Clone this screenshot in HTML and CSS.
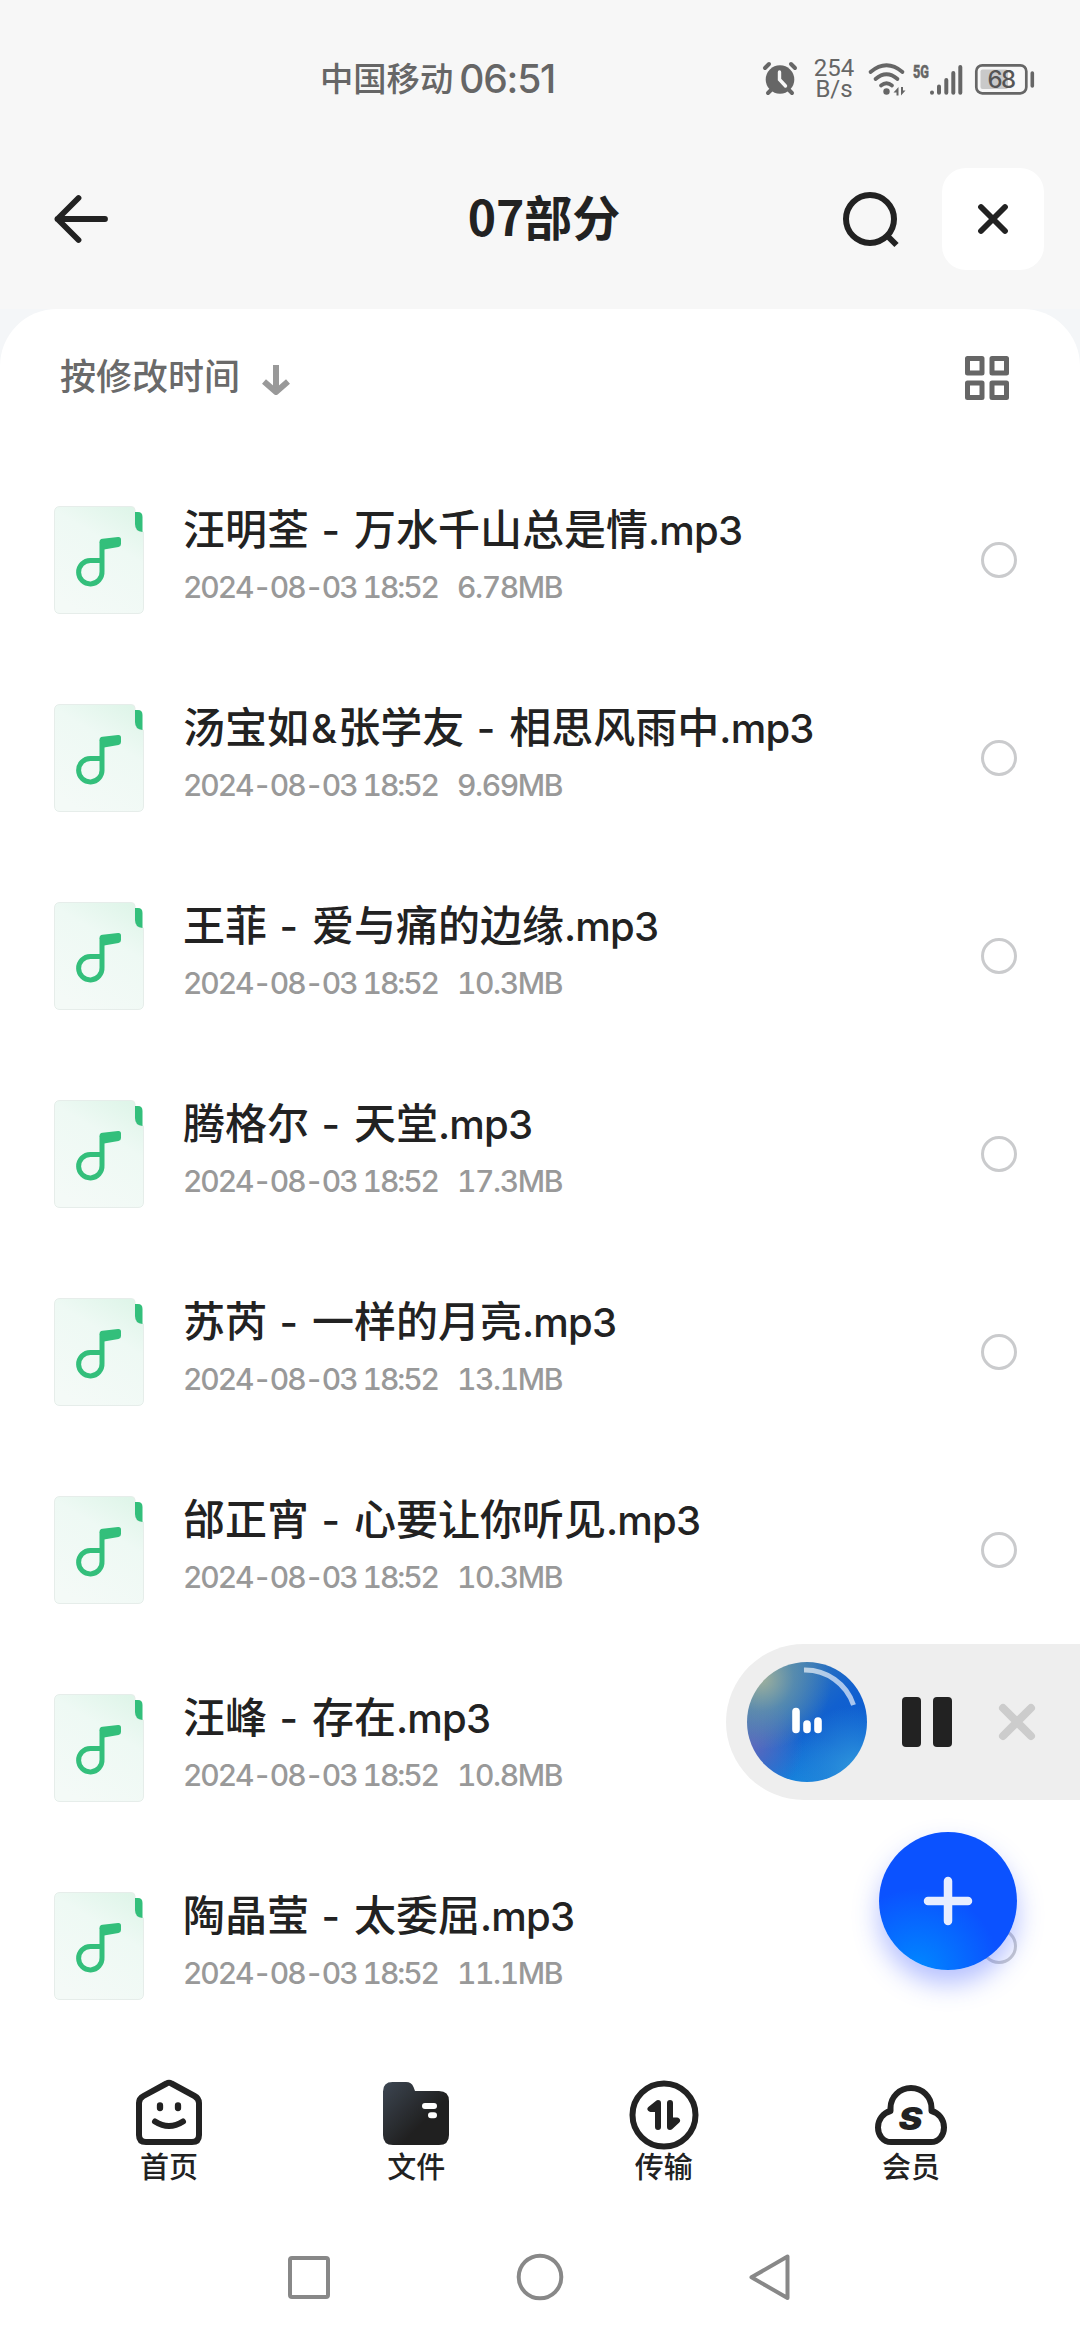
FILE: index.html
```html
<!DOCTYPE html>
<html lang="zh-CN">
<head>
<meta charset="utf-8">
<title>07部分</title>
<link rel="stylesheet" href="styles.css">
</head>
<body>
<svg width="0" height="0" class="defs" aria-hidden="true">
  <defs>
    <linearGradient id="paper" x1="0.8" y1="0" x2="0.3" y2="1">
      <stop offset="0" stop-color="#dff5e9"/><stop offset="0.35" stop-color="#eef9f4"/><stop offset="1" stop-color="#f4faf7"/>
    </linearGradient>
    <linearGradient id="folder" x1="0" y1="0" x2="0.65" y2="0.6">
      <stop offset="0" stop-color="#3d4652"/><stop offset="1" stop-color="#202020"/>
    </linearGradient>
    <symbol id="song" viewBox="0 0 90 108">
      <path d="M6 .5H77Q81 .5 81 4V19Q81 26 89.500 26V102Q89.500 107.500 84 107.500H6Q.5 107.500 .5 102V6Q.5 .5 6 .5Z" fill="url(#paper)" stroke="#e6edea"/>
      <path d="M81 6H84Q88.500 6 88.500 11V26Q81 25.500 81 18Z" fill="#33bf7b"/>
      <path d="M48 36V65.500A11.700 11.700 0 1 1 36.300 54.500H48" fill="none" stroke="#33bf7b" stroke-width="5"/>
      <path d="M45.500 36Q45.500 33 48.500 32.700L64 31Q67 30.700 67 33.500V38Q67 40.500 64.500 41L50 43.500Z" fill="#33bf7b"/>
    </symbol>
  </defs>
</svg>
<div class="phone">
  <div class="status">
    <div class="carrier"><span class="operator">中国移动</span><span class="clock">06:51</span></div>
    <svg class="alarm" width="34" height="34" viewBox="0 0 34 34">
      <circle cx="17" cy="17.500" r="14.300" fill="#666"/>
      <path d="M2 6 6 2M32 6 28 2M5 31 8 28M29 31 26 28" stroke="#666" stroke-width="4" stroke-linecap="round"/>
      <path d="M16.500 10V17.500L22.500 24" fill="none" stroke="#f7f7f7" stroke-width="3.400" stroke-linecap="round"/>
    </svg>
    <div class="speed"><span>254</span><span>B/s</span></div>
    <svg class="wifi" width="40" height="34" viewBox="0 0 40 34">
      <g fill="none" stroke="#666" stroke-width="3.700" stroke-linecap="round">
        <path d="M2.500 10Q18.500-3.500 34.500 10"/><path d="M7.500 17Q18.500 7.500 29.500 17"/><path d="M13 23.500Q18.500 19 24 23.500"/>
      </g>
      <circle cx="18.500" cy="29.500" r="3.200" fill="#666"/>
      <path d="M30.500 25V33.500H28.500V30.500H25.500ZM33 25V33.500L37.500 28.500H35V25Z" fill="#666"/>
    </svg>
    <svg class="signal" width="52" height="34" viewBox="0 0 52 34">
      <text x="1" y="15.500" textLength="16" lengthAdjust="spacingAndGlyphs" class="net">5G</text>
      <g stroke="#666" stroke-width="4" stroke-linecap="round"><path d="M20 30.500V30.700M27 24.500V30.700M34.300 18V30.700M41.300 11V30.700M48.300 5V30.700"/></g>
    </svg>
    <svg class="battery" width="60" height="32" viewBox="0 0 60 32">
      <rect x="1.300" y="2.300" width="50" height="28" rx="6" fill="none" stroke="#666" stroke-width="2.700"/>
      <rect x="5.500" y="6.500" width="27.500" height="19.500" rx="2" fill="#c9c9c9"/>
      <path d="M57.300 10V23" stroke="#666" stroke-width="3.600" stroke-linecap="round"/>
      <text x="26" y="25" text-anchor="middle" class="charge">68</text>
    </svg>
  </div>

  <header class="header">
    <svg class="back" width="54" height="50" viewBox="0 0 54 50"><path d="M24.500 4 3.500 25 24.500 46M3.500 25H51" fill="none" stroke="#222" stroke-width="5.800" stroke-linecap="round" stroke-linejoin="round"/></svg>
    <h1>07部分</h1>
    <div class="tools">
      <svg width="57" height="57" viewBox="0 0 57 57"><circle cx="27" cy="28" r="24" fill="none" stroke="#222" stroke-width="6"/><path d="M44 44.500 53.500 54" stroke="#222" stroke-width="6"/></svg>
      <div class="close"><svg width="32" height="32" viewBox="0 0 32 32"><path d="M4 4 28 28M28 4 4 28" stroke="#222" stroke-width="5.800" stroke-linecap="round"/></svg></div>
    </div>
  </header>

  <main class="sheet-back"><div class="sheet">
    <div class="sort">
      <span>按修改时间</span>
      <svg class="down" width="30" height="34" viewBox="0 0 30 34"><path d="M15 2V26" stroke="#999" stroke-width="6"/><path d="M3 18.500 15 29 27 18.500" fill="none" stroke="#999" stroke-width="6" stroke-linejoin="round"/></svg>
      <svg class="grid" width="44" height="44" viewBox="0 0 44 44"><g fill="none" stroke="#666" stroke-width="5" stroke-linejoin="round"><path d="M2.500 2.500H17V17H2.500ZM27 2.500H41.500V17H27ZM2.500 27H17V41.500H2.500ZM27 27H41.500V41.500H27Z"/></g></svg>
    </div>
    <ul class="files">
      <li><svg class="cover"><use href="#song"/></svg><div class="info"><p class="name">汪明荃<b class="dash"> - </b>万水千山总是情<b>.mp3</b></p><p class="meta"><span class="date">2024-08-03 18:52</span><span>6.78MB</span></p></div><i class="radio"></i></li>
      <li><svg class="cover"><use href="#song"/></svg><div class="info"><p class="name">汤宝如<b class="amp">&amp;</b>张学友<b class="dash"> - </b>相思风雨中<b>.mp3</b></p><p class="meta"><span class="date">2024-08-03 18:52</span><span>9.69MB</span></p></div><i class="radio"></i></li>
      <li><svg class="cover"><use href="#song"/></svg><div class="info"><p class="name">王菲<b class="dash"> - </b>爱与痛的边缘<b>.mp3</b></p><p class="meta"><span class="date">2024-08-03 18:52</span><span>10.3MB</span></p></div><i class="radio"></i></li>
      <li><svg class="cover"><use href="#song"/></svg><div class="info"><p class="name">腾格尔<b class="dash"> - </b>天堂<b>.mp3</b></p><p class="meta"><span class="date">2024-08-03 18:52</span><span>17.3MB</span></p></div><i class="radio"></i></li>
      <li><svg class="cover"><use href="#song"/></svg><div class="info"><p class="name">苏芮<b class="dash"> - </b>一样的月亮<b>.mp3</b></p><p class="meta"><span class="date">2024-08-03 18:52</span><span>13.1MB</span></p></div><i class="radio"></i></li>
      <li><svg class="cover"><use href="#song"/></svg><div class="info"><p class="name">邰正宵<b class="dash"> - </b>心要让你听见<b>.mp3</b></p><p class="meta"><span class="date">2024-08-03 18:52</span><span>10.3MB</span></p></div><i class="radio"></i></li>
      <li><svg class="cover"><use href="#song"/></svg><div class="info"><p class="name">汪峰<b class="dash"> - </b>存在<b>.mp3</b></p><p class="meta"><span class="date">2024-08-03 18:52</span><span>10.8MB</span></p></div><i class="radio"></i></li>
      <li><svg class="cover"><use href="#song"/></svg><div class="info"><p class="name">陶晶莹<b class="dash"> - </b>太委屈<b>.mp3</b></p><p class="meta"><span class="date">2024-08-03 18:52</span><span>11.1MB</span></p></div><i class="radio"></i></li>
    </ul>
  </div></main>

  <nav class="tabs">
    <a><svg width="72" height="72" viewBox="0 0 72 72"><g fill="none" stroke="#222" stroke-linecap="round" stroke-linejoin="round"><path d="M33.500 7.500Q36 6 38.500 7.500L61.500 20Q66 22.500 66 27V59Q66 66 59 66H13Q6 66 6 59V27Q6 22.500 10.500 20Z" stroke-width="6"/><path d="M22 45.500Q36 54.500 50 45.500" stroke-width="6"/><path d="M27 29.500V32M45 29.500V32" stroke-width="6.300"/></g></svg><span>首页</span></a>
    <a><svg width="72" height="72" viewBox="0 0 72 72"><path d="M12.500 6H26Q31.500 6 33.500 11L35 15H59Q69 15 69 25V59Q69 69 59 69H13Q3 69 3 59V15.500Q3 6 12.500 6Z" fill="url(#folder)"/><path d="M45 30H54M51 39.300H54" stroke="#fff" stroke-width="6" stroke-linecap="round"/></svg><span>文件</span></a>
    <a><svg width="72" height="72" viewBox="0 0 72 72"><circle cx="36" cy="39" r="31.500" fill="none" stroke="#222" stroke-width="6"/><path d="M30 51V27L22.500 33H30M42 27V51L49 44.500H42" fill="#222" stroke="#222" stroke-width="6" stroke-linecap="round" stroke-linejoin="round"/></svg><span>传输</span></a>
    <a><svg width="72" height="72" viewBox="0 0 72 72"><path d="M16 66C8 66 3 59 3 51.500C3 43.500 8 37 15.500 35V32A20.500 20 0 0 1 56.500 32V35C64 37 69 43.500 69 51.500C69 59 64 66 56 66Z" fill="none" stroke="#222" stroke-width="6" stroke-linejoin="round"/><text x="35.500" y="54" text-anchor="middle" textLength="24" lengthAdjust="spacingAndGlyphs" class="vip">S</text></svg><span>会员</span></a>
  </nav>

  <div class="system">
    <svg width="48" height="48" viewBox="0 0 48 48"><rect x="5" y="5" width="38" height="39" rx="2" fill="none" stroke="#888" stroke-width="4"/></svg>
    <svg width="48" height="48" viewBox="0 0 48 48"><circle cx="24" cy="24" r="21.300" fill="none" stroke="#888" stroke-width="4"/></svg>
    <svg width="48" height="48" viewBox="0 0 48 48"><path d="M40.500 3.500V45L4.500 24.300Z" fill="none" stroke="#888" stroke-width="4" stroke-linejoin="round"/></svg>
  </div>

  <div class="player">
    <div class="disc"><svg width="120" height="120" viewBox="0 0 120 120"><path d="M57 8A51 51 0 0 1 106.500 43" fill="none" stroke="#fff" stroke-opacity=".64" stroke-width="5"/><path d="M49 49.500V67.500M60 62V67.500M71 59V67.500" stroke="#fff" stroke-width="7.600" stroke-linecap="round"/></svg></div>
    <svg class="pause" width="50" height="50" viewBox="0 0 50 50"><rect width="19" height="50" rx="4" fill="#222"/><rect x="31" width="19" height="50" rx="4" fill="#222"/></svg>
    <svg class="stop" width="36" height="36" viewBox="0 0 36 36"><path d="M4 4 32 32M32 4 4 32" stroke="#ccc" stroke-width="8" stroke-linecap="round"/></svg>
  </div>
  <div class="add"><svg width="48" height="48" viewBox="0 0 48 48"><path d="M24 4V44M4 24H44" stroke="#e7edff" stroke-width="8.500" stroke-linecap="round"/></svg></div>
</div>
</body>
</html>
```
FILE: styles.css
```css
* { box-sizing: border-box; margin: 0; padding: 0; }
body { width: 1080px; height: 2340px; overflow: hidden; font-family: Inter, "Noto Sans CJK SC", sans-serif; color: #222; background: #fff; }
svg { display: block; flex: none; overflow: visible; }
.defs { position: absolute; }
.phone { position: relative; width: 1080px; height: 2340px; display: flex; flex-direction: column; background: #fff; }

.status { height: 129px; background: #f7f7f7; display: flex; align-items: center; padding: 28px 45px 0 320px; color: #666; }
.carrier { display: flex; align-items: center; gap: 6px; flex: 1; line-height: 48px; }
.operator { font-family: "Noto Sans CJK SC", sans-serif; font-size: 33.300px; font-weight: 500; padding-bottom: 4px; }
.clock { font-size: 39px; font-weight: 500; letter-spacing: -1.200px; }
.speed { display: flex; flex-direction: column; align-items: center; margin-left: 17px; width: 40px; font: 24px/21px Roboto, sans-serif; }
.wifi { margin-left: 14px; }
.signal { margin-left: 4px; }
.battery { margin-left: 11px; }
.net { font: 800 19px Roboto, sans-serif; fill: #666; stroke: #666; stroke-width: .5px; }
.charge { font: 500 24px Inter, sans-serif; fill: #555; letter-spacing: -1.500px; }

.header { height: 180px; background: #f7f7f7; display: grid; grid-template-columns: 1fr auto 1fr; align-items: center; padding: 0 36px 0 54px; }
.header h1 { font: 700 48px/60px "Noto Sans CJK SC", sans-serif; padding-bottom: 8px; margin-left: -10px; }
.tools { justify-self: end; display: flex; align-items: center; gap: 42px; }
.close { width: 102px; height: 102px; border-radius: 24px; background: #fff; display: flex; align-items: center; justify-content: center; }

.sheet-back { background: #f4f6f8; height: 1736px; }
.sheet { height: 100%; background: #fff; border-radius: 57px 57px 0 0; }
.sort { height: 152px; display: flex; align-items: center; padding: 0 71px 14px 60px; font: 500 36px/48px "Noto Sans CJK SC", sans-serif; color: #6a6a6a; }
.sort span { padding-bottom: 8px; }
.down { margin-left: 21px; margin-top: 4px; }
.grid { margin-left: auto; }

.files { list-style: none; }
.files li { height: 198px; display: flex; align-items: center; padding: 0 63px 0 54px; }
.cover { width: 90px; height: 108px; }
.info { flex: 1; margin-left: 39px; padding-bottom: 15px; }
.name { font: 500 42px/60px "Noto Sans CJK SC", sans-serif; color: #222; white-space: nowrap; }
.name b { font: 500 40px/60px Inter, sans-serif; letter-spacing: -.800px; }
.name .dash { white-space: pre; letter-spacing: 1.700px; }
.name .amp { margin: 0 2px; }
.meta { display: flex; gap: 19px; font-size: 30px; line-height: 42px; font-weight: 500; font-variant-numeric: tabular-nums; letter-spacing: -1.400px; color: #999; margin-top: 5px; }
.date { letter-spacing: -2.080px; }
.radio { width: 36px; height: 36px; border: 3.500px solid #cacbcd; border-radius: 50%; }

.tabs { height: 155px; display: grid; grid-template-columns: repeat(4, 247.300px); justify-content: center; padding-top: 31px; }
.tabs a { display: flex; flex-direction: column; align-items: center; }
.tabs span { font: 500 29px/40px "Noto Sans CJK SC", sans-serif; margin-top: -3px; }
.vip { font: italic 900 31px Inter, sans-serif; fill: #222; }

.system { height: 140px; display: flex; justify-content: center; gap: 183px; padding-top: 53px; }

.player { position: absolute; right: 0; top: 1644px; width: 354px; height: 156px; border-radius: 78px 0 0 78px; background: #eee; display: flex; align-items: center; padding-left: 21px; }
.disc { width: 120px; height: 120px; border-radius: 50%; background: radial-gradient(circle at 12% 14%, #9fb09d 0, rgba(115,155,165,.6) 22%, transparent 48%), radial-gradient(circle at 4% 70%, rgba(96,104,190,.9) 0, transparent 36%), radial-gradient(circle at 90% 90%, #2f97dc 0, transparent 42%), radial-gradient(circle at 40% 110%, #188ade 0, transparent 42%), linear-gradient(135deg, #4585ab, #1160cf 55%, #085ad5); }
.pause { margin-left: 35px; }
.stop { margin-left: 47px; }
.add { position: absolute; left: 879px; top: 1832px; width: 138px; height: 138px; border-radius: 50%; display: flex; align-items: center; justify-content: center; background: radial-gradient(circle at 28% 100%, #0088ff 0, #0b52ff 48%); box-shadow: 0 14px 26px rgba(50, 80, 255, .36); }
```
